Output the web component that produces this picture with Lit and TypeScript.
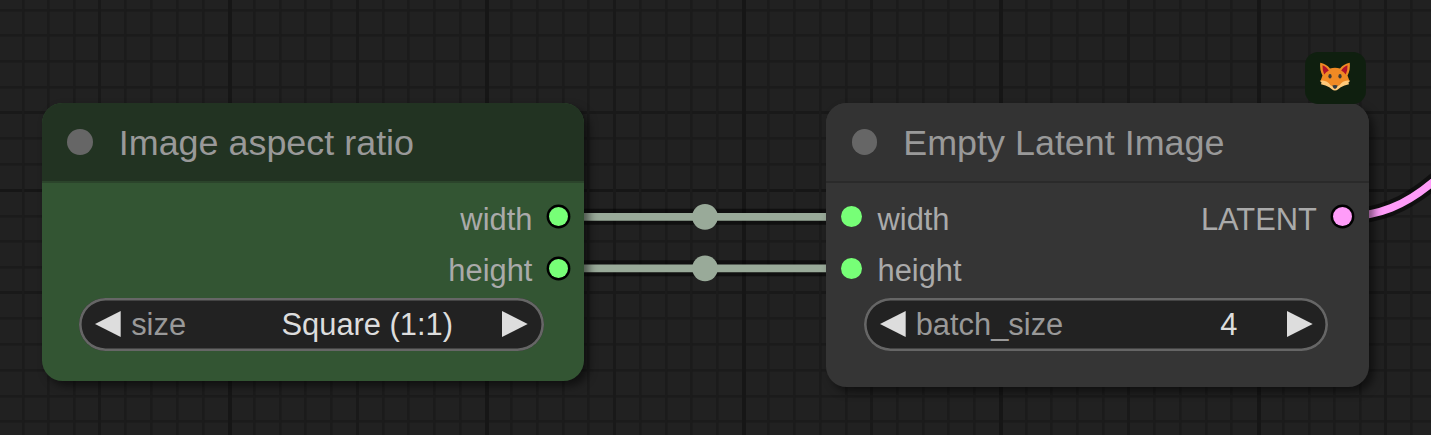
import { LitElement, html, css, svg } from "lit";
import { customElement, property } from "lit/decorators.js";

const PITCH = 25.72;

@customElement("graph-canvas")
class GraphCanvas extends LitElement {
  static styles = css`
    :host { display: block; }
    svg { display: block; }
    .minor { fill: #1b1b1b; }
    .mid { fill: #191919; }
    .major { fill: #161616; }
    .rim { fill: none; stroke: #000; stroke-opacity: 0.5; stroke-width: 16; }
    .link { fill: none; stroke: #9a9; stroke-width: 7.7; }
    .pink { stroke: #ff9cf9; }
    .knot { fill: #9a9; }
  `;
  render() {
    const columns = Array.from({ length: 56 }, (_, n) => {
      const k = n - 8;
      const major = k % 10 === 0;
      const mid = !major && k % 5 === 0;
      const w = major ? 4 : mid ? 3 : 2.4;
      const x = (major ? 229.8 : 228.5) + k * PITCH;
      return svg`<rect class=${major ? "major" : mid ? "mid" : "minor"} x=${Math.round(x - w / 2)} y="0" width=${w} height="435"/>`;
    });
    const rows = Array.from({ length: 17 }, (_, n) => {
      const k = n - 7;
      const major = k === 0;
      const mid = k === -3 || k === 4;
      const w = major || mid ? 3 : 2.4;
      const y = 190 + k * PITCH;
      return svg`<rect class=${major ? "major" : mid ? "mid" : "minor"} x="0" y=${Math.round(y - w / 2)} width="1431" height=${w}/>`;
    });
    return html`<svg width="1431" height="435" viewBox="0 0 1431 435">
      <rect width="1431" height="435" fill="#212121"/>
      ${rows}${columns}
      ${[216.8, 268.3].map((y) => svg`
        <path class="rim" d="M558 ${y}H851"/>
        <path class="link" d="M558 ${y}H851"/>
        <circle class="knot" cx="705" cy=${y} r="12.9"/>`)}
      <path class="rim" d="M1343 216.500C1376 217 1406 207 1441 175"/>
      <path class="link pink" d="M1343 216.500C1376 217 1406 207 1441 175"/>
    </svg>`;
  }
}

interface Slot { name: string; color: string; }

@customElement("graph-node")
class GraphNode extends LitElement {
  @property() heading = "";
  @property() label = "";
  @property() value = "";
  @property({ attribute: false }) inputs: Slot[] = [];
  @property({ attribute: false }) outputs: Slot[] = [];

  static styles = css`
    :host {
      display: flex;
      flex-direction: column;
      box-sizing: border-box;
      border-radius: 20.5px;
      background: var(--body);
      box-shadow: 5px 5px 8px rgba(0, 0, 0, 0.5);
      font-family: "Liberation Sans", Arial, sans-serif;
      font-size: 30.87px;
      color: #aaa;
      white-space: nowrap;
    }
    .head {
      display: flex;
      align-items: center;
      gap: 25.8px;
      height: 78px;
      padding-left: 25.7px;
      background: var(--head);
      border-bottom: 2px solid var(--rule);
      border-radius: 20.5px 20.5px 0 0;
      font-size: 35.9px;
      color: #999;
    }
    .title { padding-top: 1.4px; }
    .bullet { width: 25.8px; height: 25.8px; border-radius: 50%; background: #666; }
    .slots { display: flex; justify-content: space-between; padding: 7.7px 14px 0 14.8px; }
    .inputs, .outputs { display: grid; grid-auto-rows: 51.4px; }
    .slot { display: flex; align-items: center; gap: 15.7px; }
    .outputs .slot { flex-direction: row-reverse; gap: 14px; }
    .name { padding-top: 6px; }
    .dot { width: 21px; height: 21px; border-radius: 50%; }
    .outputs .dot { width: 19px; height: 19px; margin: 2.3px; box-shadow: 0 0 0 2.4px #000; }
    .widget {
      display: flex;
      align-items: center;
      box-sizing: border-box;
      height: 53.4px;
      margin: 3.7px 40.2px 0 37.5px;
      padding: 0 15.8px 0 16.2px;
      box-shadow: inset 0 0 0 2.6px #666;
      border-radius: 27px;
      background: #222;
      color: #999;
    }
    .arrow { width: 26px; height: 26px; fill: #ddd; }
    .label { flex: 1; padding: 1.4px 0 0 10px; }
    .value { padding: 1.4px 49px 0 0; color: #ddd; }
  `;
  render() {
    const slot = (s: Slot) => html`<div class="slot">
      <span class="dot" style="background:${s.color}"></span><span class="name">${s.name}</span>
    </div>`;
    return html`
      <div class="head"><span class="bullet"></span><span class="title">${this.heading}</span></div>
      <div class="slots">
        <div class="inputs">${this.inputs.map(slot)}</div>
        <div class="outputs">${this.outputs.map(slot)}</div>
      </div>
      <div class="widget">
        <svg class="arrow" viewBox="0 0 26 26"><path d="M25.700 0V26L0 13Z"/></svg>
        <span class="label">${this.label}</span>
        <span class="value">${this.value}</span>
        <svg class="arrow" viewBox="0 0 26 26"><path d="M0 0V26L25.700 13Z"/></svg>
      </div>`;
  }
}

@customElement("app-root")
class AppRoot extends LitElement {
  static styles = css`
    :host { display: block; position: relative; width: 1431px; height: 435px; overflow: hidden; }
    graph-node { position: absolute; top: 103.4px; width: 542.5px; }
    .ratio { left: 41.5px; height: 277.5px; --head: #223322; --body: #335533; --rule: #2b442b; }
    .latent { left: 826px; height: 284px; --head: #333; --body: #353535; --rule: #2a2a2a; }
    .badge {
      position: absolute;
      left: 1304.5px;
      top: 52px;
      width: 61.5px;
      height: 51.5px;
      display: flex;
      justify-content: center;
      border-radius: 13px;
      background: #0f1f0f;
    }
    .fox { width: 32px; height: 30px; margin-top: 10px; }
  `;
  render() {
    const green = "#77ff77";
    return html`
      <graph-canvas></graph-canvas>
      <graph-node class="ratio" heading="Image aspect ratio" label="size" value="Square (1:1)"
        .outputs=${[{ name: "width", color: green }, { name: "height", color: green }]}></graph-node>
      <graph-node class="latent" heading="Empty Latent Image" label="batch_size" value="4"
        .inputs=${[{ name: "width", color: green }, { name: "height", color: green }]}
        .outputs=${[{ name: "LATENT", color: "#ff9cf9" }]}></graph-node>
      <div class="badge">
        <svg class="fox" viewBox="0 0 32 30">
          <path fill="#f08a24" d="M1.200 .8C5 1.200 8.500 3.500 11 6.500Q16 4.800 21 6.500C23.500 3.500 27 1.200 30.800 .8Q31.500 8 28.500 13.500L30.500 19L24 23L16 27.500L8 23L1.500 19L3.500 13.500Q.5 8 1.200 .8Z"/>
          <path fill="#b1112b" d="M3.500 3.200C6.500 4.500 8.500 6.200 9.800 8.500Q7 10 5.200 12.500Q3.200 8 3.500 3.200ZM28.500 3.200C25.500 4.500 23.500 6.200 22.200 8.500Q25 10 26.800 12.500Q28.800 8 28.500 3.200Z"/>
          <path fill="#ffc97a" d="M.8 18.800L3.500 18.500Q8.500 18.800 11.500 23.200Q14 24.800 16 24.500Q18 24.800 20.500 23.200Q23.500 18.800 28.500 18.500L31.200 18.800L29.500 20.500L30 22.300L25.500 23.500Q21 25 19.500 27Q17.500 28.600 16 28.600Q14.500 28.600 12.500 27Q11 25 6.500 23.500L2 22.300L2.500 20.500Z"/>
          <ellipse cx="11" cy="14.300" rx="1.600" ry="2.300" fill="#3d3a36"/>
          <ellipse cx="21" cy="14.300" rx="1.600" ry="2.300" fill="#3d3a36"/>
          <path fill="#333b40" d="M13.300 23.500Q16 22.500 18.700 23.500Q18 26.300 16 27Q14 26.300 13.300 23.500Z"/>
        </svg>
      </div>`;
  }
}
